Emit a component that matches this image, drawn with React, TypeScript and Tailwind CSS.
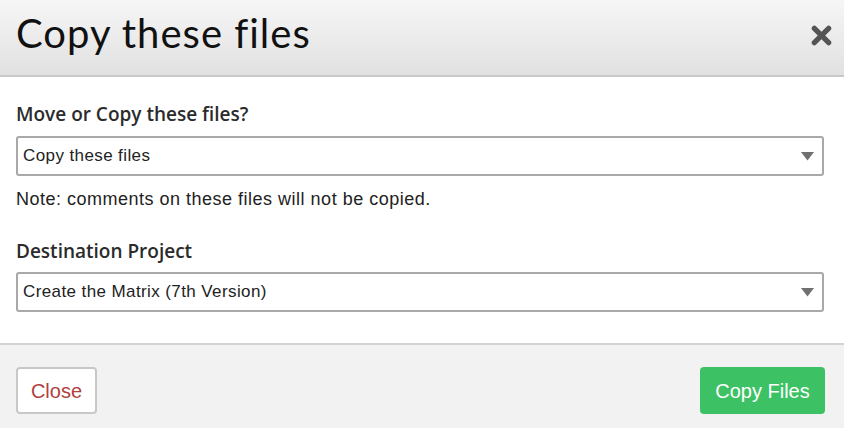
import { ReactNode } from 'react';

const body = { fontFamily: '"Liberation Sans", Arial, sans-serif' };
const heading = { fontFamily: 'Lato, "Open Sans", sans-serif' };
const label = { fontFamily: '"Open Sans", Lato, sans-serif' };

function Select({ value }: { value: string }) {
  return (
    <div className="flex items-center justify-between h-[40px] w-full border-2 border-[#a9a9a9] rounded-[3px] bg-white pl-[5px] pr-[8px]">
      <span className="text-[17px] tracking-[0.4px] text-[#222]" style={body}>{value}</span>
      <svg width="13" height="9" viewBox="0 0 13 9">
        <path d="M0 0 H13 L6.5 8.5 Z" fill="#707070" />
      </svg>
    </div>
  );
}

function Label({ children }: { children: ReactNode }) {
  return (
    <h4 className="text-[19px] font-semibold text-[#2b2b2b] leading-[22px]" style={label}>
      {children}
    </h4>
  );
}

export default function App() {
  return (
    <div className="w-[844px] h-[428px] flex flex-col bg-white overflow-hidden">
      <div className="h-[77px] flex items-center justify-between pl-[16px] pr-[12px] bg-gradient-to-b from-[#f6f6f6] to-[#e1e1e1] border-b-2 border-[#c9c9c9]">
        <h1 className="text-[40px] font-normal tracking-[1px] text-[#111] leading-none pb-[10px]" style={heading}>
          Copy these files
        </h1>
        <svg width="21" height="21" viewBox="0 0 22 22" className="mb-[4px]">
          <path d="M3.5 3.5 L18.5 18.5 M18.5 3.5 L3.5 18.5" stroke="#555" strokeWidth="5.5" strokeLinecap="round" />
        </svg>
      </div>

      <div className="flex flex-col pl-[16px] pr-[20px] pt-[26px] h-[268px] border-b-2 border-[#d3d3d3]">
        <Label>Move or Copy these files?</Label>
        <div className="mt-[11px]">
          <Select value="Copy these files" />
        </div>
        <p className="mt-[11px] text-[18px] tracking-[0.5px] text-[#222] leading-[24px]" style={body}>
          Note: comments on these files will not be copied.
        </p>
        <div className="mt-[29px]">
          <Label>Destination Project</Label>
        </div>
        <div className="mt-[10px]">
          <Select value="Create the Matrix (7th Version)" />
        </div>
      </div>

      <div className="flex-1 bg-[#f2f2f2] flex items-start justify-between pl-[16px] pr-[19px] pt-[22px]">
        <button
          className="h-[47px] w-[81px] bg-white border-2 border-[#c8c8c8] rounded-[4px] text-[20px] text-[#b0413e]"
          style={body}
        >
          Close
        </button>
        <button
          className="h-[47px] w-[125px] bg-[#3dc165] rounded-[4px] text-[20px] text-white"
          style={body}
        >
          Copy Files
        </button>
      </div>
    </div>
  );
}
